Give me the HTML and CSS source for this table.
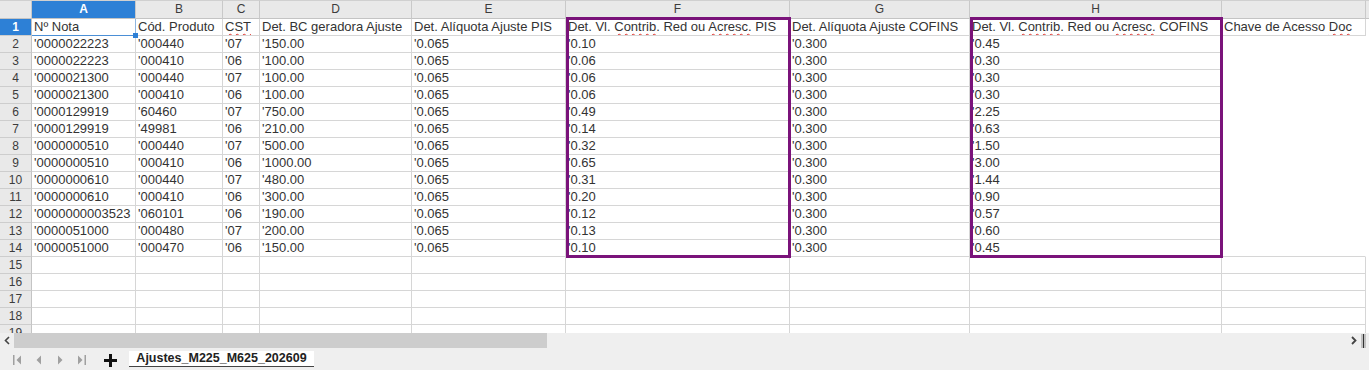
FILE: index.html
```html
<!DOCTYPE html>
<html lang="pt">
<head>
<meta charset="utf-8">
<title>Ajustes_M225_M625_202609</title>
<link rel="stylesheet" href="styles.css">
</head>
<body>
<div class="app">
  <div class="sheet">
    <div class="grid">
      <div class="ch corner"></div><div class="ch sel">A</div><div class="ch">B</div><div class="ch">C</div><div class="ch">D</div><div class="ch">E</div><div class="ch">F</div><div class="ch">G</div><div class="ch">H</div><div class="ch"></div><div class="ch end"></div>

      <div class="rh sel">1</div><div class="c active">Nº Nota<span class="handle"></span></div><div class="c">Cód. Produto</div><div class="c"><span class="sp">CST</span></div><div class="c">Det. BC geradora Ajuste</div><div class="c">Det. Alíquota Ajuste PIS</div><div class="c">Det. Vl. <span class="sp">Contrib.</span> Red ou <span class="sp">Acresc.</span> PIS</div><div class="c">Det. Alíquota Ajuste COFINS</div><div class="c">Det. Vl. <span class="sp">Contrib.</span> Red ou <span class="sp">Acresc.</span> COFINS</div><div class="c">Chave de Acesso <span class="sp">Doc</span></div><div class="c e"></div>

      <div class="rh">2</div><div class="c">'0000022223</div><div class="c">'000440</div><div class="c">'07</div><div class="c">'150.00</div><div class="c">'0.065</div><div class="c">'0.10</div><div class="c">'0.300</div><div class="c">'0.45</div><div class="c nb nr"></div><div class="c e"></div>
      <div class="rh">3</div><div class="c">'0000022223</div><div class="c">'000410</div><div class="c">'06</div><div class="c">'100.00</div><div class="c">'0.065</div><div class="c">'0.06</div><div class="c">'0.300</div><div class="c">'0.30</div><div class="c nb nr"></div><div class="c e"></div>
      <div class="rh">4</div><div class="c">'0000021300</div><div class="c">'000440</div><div class="c">'07</div><div class="c">'100.00</div><div class="c">'0.065</div><div class="c">'0.06</div><div class="c">'0.300</div><div class="c">'0.30</div><div class="c nb nr"></div><div class="c e"></div>
      <div class="rh">5</div><div class="c">'0000021300</div><div class="c">'000410</div><div class="c">'06</div><div class="c">'100.00</div><div class="c">'0.065</div><div class="c">'0.06</div><div class="c">'0.300</div><div class="c">'0.30</div><div class="c nb nr"></div><div class="c e"></div>
      <div class="rh">6</div><div class="c">'0000129919</div><div class="c">'60460</div><div class="c">'07</div><div class="c">'750.00</div><div class="c">'0.065</div><div class="c">'0.49</div><div class="c">'0.300</div><div class="c">'2.25</div><div class="c nb nr"></div><div class="c e"></div>
      <div class="rh">7</div><div class="c">'0000129919</div><div class="c">'49981</div><div class="c">'06</div><div class="c">'210.00</div><div class="c">'0.065</div><div class="c">'0.14</div><div class="c">'0.300</div><div class="c">'0.63</div><div class="c nb nr"></div><div class="c e"></div>
      <div class="rh">8</div><div class="c">'0000000510</div><div class="c">'000440</div><div class="c">'07</div><div class="c">'500.00</div><div class="c">'0.065</div><div class="c">'0.32</div><div class="c">'0.300</div><div class="c">'1.50</div><div class="c nb nr"></div><div class="c e"></div>
      <div class="rh">9</div><div class="c">'0000000510</div><div class="c">'000410</div><div class="c">'06</div><div class="c">'1000.00</div><div class="c">'0.065</div><div class="c">'0.65</div><div class="c">'0.300</div><div class="c">'3.00</div><div class="c nb nr"></div><div class="c e"></div>
      <div class="rh">10</div><div class="c">'0000000610</div><div class="c">'000440</div><div class="c">'07</div><div class="c">'480.00</div><div class="c">'0.065</div><div class="c">'0.31</div><div class="c">'0.300</div><div class="c">'1.44</div><div class="c nb nr"></div><div class="c e"></div>
      <div class="rh">11</div><div class="c">'0000000610</div><div class="c">'000410</div><div class="c">'06</div><div class="c">'300.00</div><div class="c">'0.065</div><div class="c">'0.20</div><div class="c">'0.300</div><div class="c">'0.90</div><div class="c nb nr"></div><div class="c e"></div>
      <div class="rh">12</div><div class="c">'0000000003523</div><div class="c">'060101</div><div class="c">'06</div><div class="c">'190.00</div><div class="c">'0.065</div><div class="c">'0.12</div><div class="c">'0.300</div><div class="c">'0.57</div><div class="c nb nr"></div><div class="c e"></div>
      <div class="rh">13</div><div class="c">'0000051000</div><div class="c">'000480</div><div class="c">'07</div><div class="c">'200.00</div><div class="c">'0.065</div><div class="c">'0.13</div><div class="c">'0.300</div><div class="c">'0.60</div><div class="c nb nr"></div><div class="c e"></div>
      <div class="rh">14</div><div class="c">'0000051000</div><div class="c">'000470</div><div class="c">'06</div><div class="c">'150.00</div><div class="c">'0.065</div><div class="c">'0.10</div><div class="c">'0.300</div><div class="c">'0.45</div><div class="c nr"></div><div class="c e"></div>

      <div class="rh">15</div><div class="c"></div><div class="c"></div><div class="c"></div><div class="c"></div><div class="c"></div><div class="c"></div><div class="c"></div><div class="c"></div><div class="c"></div><div class="c e"></div>
      <div class="rh">16</div><div class="c"></div><div class="c"></div><div class="c"></div><div class="c"></div><div class="c"></div><div class="c"></div><div class="c"></div><div class="c"></div><div class="c"></div><div class="c e"></div>
      <div class="rh">17</div><div class="c"></div><div class="c"></div><div class="c"></div><div class="c"></div><div class="c"></div><div class="c"></div><div class="c"></div><div class="c"></div><div class="c"></div><div class="c e"></div>
      <div class="rh">18</div><div class="c"></div><div class="c"></div><div class="c"></div><div class="c"></div><div class="c"></div><div class="c"></div><div class="c"></div><div class="c"></div><div class="c"></div><div class="c e"></div>
      <div class="rh">19</div><div class="c"></div><div class="c"></div><div class="c"></div><div class="c"></div><div class="c"></div><div class="c"></div><div class="c"></div><div class="c"></div><div class="c"></div><div class="c e"></div>
    </div>
    <div class="box box-f"></div>
    <div class="box box-h"></div>
  </div>

  <div class="hscroll">
    <svg class="arrow" width="14" height="15" viewBox="0 0 14 15"><path d="M9 4 L5.5 7.5 L9 11" fill="none" stroke="#444" stroke-width="1.6"/></svg>
    <div class="track"><div class="thumb"></div></div>
    <svg class="arrow" width="12" height="15" viewBox="0 0 12 15"><path d="M4 4 L7.5 7.5 L4 11" fill="none" stroke="#444" stroke-width="1.8"/></svg>
    <div class="splitter"></div>
  </div>

  <div class="tabbar">
    <div class="nav">
      <svg width="12" height="12" viewBox="0 0 12 12"><rect x="1" y="1" width="1.5" height="10" fill="#a0a0a0"/><path d="M9 1.5 L4.5 6 L9 10.5 Z" fill="#a0a0a0"/></svg>
      <svg width="12" height="12" viewBox="0 0 12 12"><path d="M8 1.5 L3.5 6 L8 10.5 Z" fill="#a0a0a0"/></svg>
      <svg width="12" height="12" viewBox="0 0 12 12"><path d="M4 1.5 L8.5 6 L4 10.5 Z" fill="#a0a0a0"/></svg>
      <svg width="12" height="12" viewBox="0 0 12 12"><path d="M3 1.5 L7.5 6 L3 10.5 Z" fill="#a0a0a0"/><rect x="9.5" y="1" width="1.5" height="10" fill="#a0a0a0"/></svg>
    </div>
    <svg class="plus" width="13" height="13" viewBox="0 0 13 13"><rect x="5" y="0" width="3" height="13" fill="#111"/><rect x="0" y="5" width="13" height="3" fill="#111"/></svg>
    <div class="tab">Ajustes_M225_M625_202609</div>
  </div>
</div>
</body>
</html>
```

FILE: styles.css
```css
* { box-sizing: border-box; }

html, body {
  margin: 0;
  padding: 0;
  width: 1369px;
  height: 370px;
  overflow: hidden;
  background: #ffffff;
  font-family: "Liberation Sans", Arial, sans-serif;
}

.app {
  display: flex;
  flex-direction: column;
  width: 1369px;
  height: 370px;
}

.sheet {
  position: relative;
  height: 333px;
  overflow: hidden;
  flex: none;
}

.grid {
  display: grid;
  grid-template-columns: 32px 104px 87px 37px 152px 154px 224px 180px 252px 144px 3px;
  grid-template-rows: 19px;
  grid-auto-rows: 17px;
}

.ch {
  background: #e9e9e9;
  border-right: 1px solid #c9c9c9;
  border-bottom: 1px solid #c4c4c4;
  border-top: 1px solid #d0d0d0;
  color: #3c3c3c;
  font-size: 12px;
  line-height: 17px;
  text-align: center;
}

.ch.end { border-right: none; }

.ch.sel, .rh.sel {
  background: #2d80d6;
  color: #ffffff;
  font-weight: bold;
}

.rh {
  background: #e9e9e9;
  border-right: 1px solid #c4c4c4;
  border-bottom: 1px solid #cdcdcd;
  color: #3c3c3c;
  font-size: 12px;
  line-height: 16px;
  text-align: center;
}

.c {
  position: relative;
  border-right: 1px solid #d6d6d6;
  border-bottom: 1px solid #d6d6d6;
  padding: 0 2px;
  font-size: 13px;
  line-height: 16px;
  color: #333333;
  white-space: nowrap;
  overflow: hidden;
}

.c.active {
  overflow: visible;
  border-right-color: #8fb6e0;
  border-bottom-color: #4b8fd6;
}

.handle {
  position: absolute;
  right: -3px;
  bottom: -3px;
  width: 5px;
  height: 5px;
  background: #2d80d6;
  z-index: 2;
}

.c.nb { border-bottom-color: transparent; }
.c.nr { border-right-color: transparent; }
.c.e { border: none; }

.sp {
  text-decoration: underline wavy #e0302a;
  text-decoration-thickness: 1px;
  text-underline-offset: 2px;
  text-decoration-skip-ink: none;
}

.box {
  position: absolute;
  top: 17px;
  height: 241px;
  border: 3px solid #7a137a;
  pointer-events: none;
}

.box-f { left: 566px; width: 225px; }
.box-h { left: 970px; width: 253px; }

.hscroll {
  display: flex;
  align-items: center;
  height: 15px;
  background: #efefef;
  flex: none;
}

.hscroll .arrow { flex: none; }

.track {
  flex: 1;
  height: 15px;
  display: flex;
}

.thumb {
  width: 533px;
  height: 15px;
  background: #cdcdcd;
}

.splitter {
  width: 5px;
  height: 14px;
  margin: 0 3px 0 1px;
  background: #c2c2c2;
  border-left: 2px solid #c2c2c2;
  border-right: 1px solid #c2c2c2;
  box-shadow: inset 1px 0 0 #333;
}

.tabbar {
  flex: 1;
  display: flex;
  align-items: flex-start;
  background: #efefef;
  padding-top: 3px;
}

.nav {
  display: flex;
  gap: 9px;
  padding: 3px 0 0 12px;
  width: 102px;
}

.plus {
  margin: 3px 12px 0 2px;
  flex: none;
}

.tab {
  width: 185px;
  height: 16px;
  background: #ffffff;
  border-bottom: 1px solid #444;
  font-size: 12.5px;
  font-weight: bold;
  line-height: 15px;
  color: #222;
  text-align: center;
}
```
